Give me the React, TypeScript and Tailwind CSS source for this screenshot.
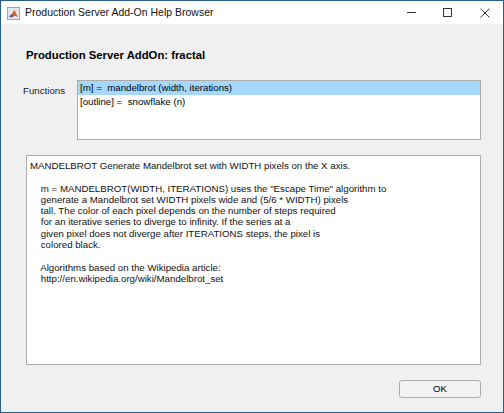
import React from "react";

const functions = [
  { sig: "[m] =  mandelbrot (width, iterations)", selected: true },
  { sig: "[outline] =  snowflake (n)", selected: false },
];

const helpLines = [
  "MANDELBROT Generate Mandelbrot set with WIDTH pixels on the X axis.",
  "",
  "    m = MANDELBROT(WIDTH, ITERATIONS) uses the \"Escape Time\" algorithm to",
  "    generate a Mandelbrot set WIDTH pixels wide and (5/6 * WIDTH) pixels",
  "    tall. The color of each pixel depends on the number of steps required",
  "    for an iterative series to diverge to infinity. If the series at a",
  "    given pixel does not diverge after ITERATIONS steps, the pixel is",
  "    colored black.",
  "",
  "    Algorithms based on the Wikipedia article:",
  "    http://en.wikipedia.org/wiki/Mandelbrot_set",
];

function AppIcon() {
  return (
    <svg width="13" height="13" viewBox="0 0 13 13">
      <rect x="0.5" y="0.5" width="12" height="12" fill="#dfe6ee" stroke="#9aa7b6" />
      <path d="M2 9.5 L5 7 L7.2 3 L8.6 6 L11 10 L7.5 8.8 L5.5 10.5 Z" fill="#e2571e" />
      <path d="M2 9.5 L5 7 L6 9 L3.5 10.5 Z" fill="#2c6fb7" />
      <path d="M7.2 3 L8.6 6 L9.5 5 Z" fill="#f4a32d" />
    </svg>
  );
}

export default function App() {
  return (
    <div className="w-[504px] h-[413px] flex flex-col bg-[#f0f0f0] border border-[#2c5d85] font-['Liberation_Sans',Arial,sans-serif] text-black overflow-hidden">
      {/* title bar */}
      <div className="h-[23px] shrink-0 bg-white flex items-center">
        <div className="ml-[6px] mt-[2px]">
          <AppIcon />
        </div>
        <span className="ml-[5px] mt-[1px] text-[10.5px] text-[#111]">
          Production Server Add-On Help Browser
        </span>
        <div className="ml-auto flex items-center h-full">
          <div className="w-[34px] h-full flex items-center justify-center">
            <div className="w-[9px] h-px bg-[#333]" />
          </div>
          <div className="w-[39px] h-full flex items-center justify-center">
            <div className="w-[9px] h-[9px] border border-[#333]" />
          </div>
          <div className="w-[36px] h-full flex items-center justify-center">
            <svg width="10" height="10" viewBox="0 0 10 10">
              <path d="M0.5 0.5 L9.5 9.5 M9.5 0.5 L0.5 9.5" stroke="#333" strokeWidth="1" />
            </svg>
          </div>
        </div>
      </div>

      {/* heading */}
      <h1 className="mt-[24px] ml-[25px] text-[11.3px] leading-[14px] font-bold">
        Production Server AddOn: fractal
      </h1>

      {/* functions list */}
      <div className="mt-[18px] flex">
        <label className="ml-[22px] w-[54px] pt-[4px] text-[9.7px] leading-[14px] text-[#222]">
          Functions
        </label>
        <div className="w-[404px] h-[60px] bg-white border border-[#acacac] text-[9.7px]">
          {functions.map((f) => (
            <div
              key={f.sig}
              className={
                f.selected
                  ? "h-[14px] leading-[14px] pl-[2px] bg-[#a6d8ff] whitespace-pre"
                  : "h-[14px] leading-[14px] pl-[2px] whitespace-pre"
              }
            >
              {f.sig}
            </div>
          ))}
        </div>
      </div>

      {/* help text */}
      <div className="mt-[15px] ml-[25px] w-[455px] h-[210px] bg-white border border-[#acacac] pt-[4px] pl-[3px] text-[9.7px] leading-[11.3px] text-[#111]">
        {helpLines.map((l, i) => (
          <div key={i} className="h-[11.3px] whitespace-pre">
            {l}
          </div>
        ))}
      </div>

      {/* footer */}
      <div className="mt-[15px] flex justify-end pr-[22px]">
        <button className="w-[82px] h-[18px] rounded-[3px] border border-[#adadad] bg-[#f2f2f2] text-[9.7px] leading-[16px]">
          OK
        </button>
      </div>
    </div>
  );
}
